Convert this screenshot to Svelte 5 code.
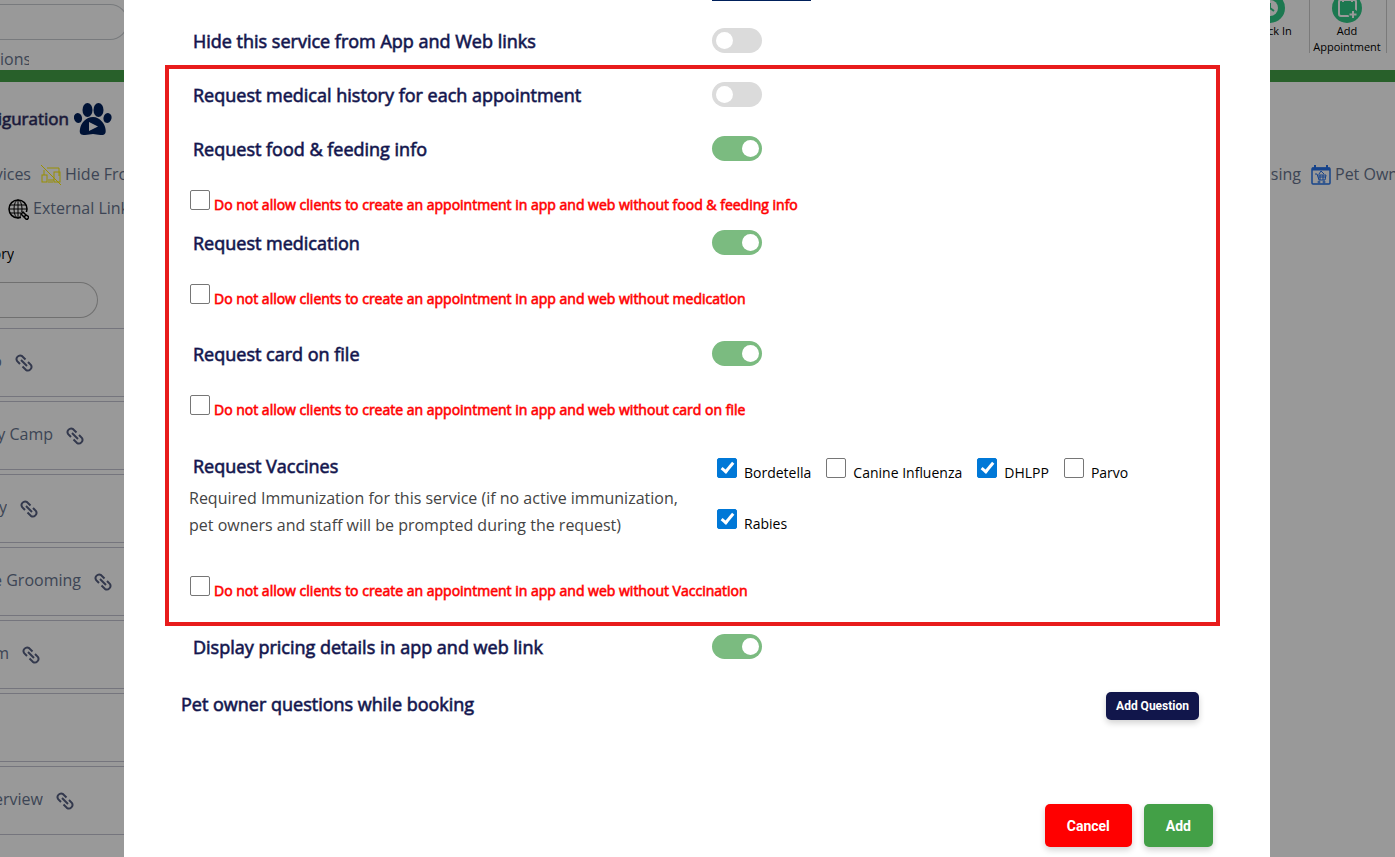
<style>
:global(body) {
  font-family: 'Open Sans', 'Noto Sans', sans-serif;
  background: #fff;
}

.screen {
  position: relative;
  height: 100vh;
  overflow: hidden;
}

.page {
  height: 100%;
  overflow: hidden;
  white-space: nowrap;
  color: #67748e;
  font-size: 16px;
}

.topbar {
  display: flex;
  justify-content: space-between;
  height: 70px;
  border-bottom: 12px solid #43a047;
  overflow: hidden;
}

.search {
  padding-top: 4px;
}

.search input,
.filter input {
  box-sizing: border-box;
  display: block;
  height: 36px;
  border: 1px solid #c8ccd0;
  border-left: 0;
  border-radius: 0 18px 18px 0;
  background: transparent;
}

.search input {
  width: 128px;
}

.search a {
  display: block;
  line-height: 38px;
}

a {
  color: inherit;
  text-decoration: none;
}

.search a {
  width: 29px;
}

.shortcuts {
  display: flex;
  height: 60px;
  margin-top: -7px;
  padding-right: 8px;
}

.shortcut {
  box-sizing: border-box;
  width: 77px;
  padding-right: 2px;
  border-right: 1px solid #ccc;
  color: #000;
  font-size: 11px;
  line-height: 16px;
  text-align: center;
}

.shortcut svg {
  display: block;
  margin: 0 auto;
}

.heading {
  display: flex;
  align-items: center;
  gap: 5px;
  margin: 0;
  padding-top: 20px;
  color: #2b2b60;
  font-size: 17px;
  font-weight: 400;
  line-height: 34px;
}

.clip {
  display: flex;
  flex: none;
  justify-content: flex-end;
  overflow: hidden;
}

.tabs {
  display: flex;
  justify-content: space-between;
  padding-top: 21px;
  line-height: 34px;
}

.tab-row {
  display: flex;
  align-items: center;
  gap: 10px;
}

.tab-row.second {
  padding-left: 8px;
}

.tab-row a {
  display: flex;
  flex: none;
  align-items: center;
  gap: 4px;
}

.tab-row svg {
  padding-top: 2px;
}

.tabs-right {
  width: 125px;
  overflow: hidden;
}

.filter label {
  display: block;
  padding: 19px 0 18px;
  color: #000;
  font-size: 14px;
  line-height: 20px;
}

.filter input {
  width: 98px;
  border-color: #bbb;
}

.cards {
  display: flex;
  flex-direction: column;
  gap: 4px;
  width: 50%;
  margin: 10px 0 0;
  padding: 0;
}

.cards li {
  box-sizing: border-box;
  display: flex;
  align-items: center;
  gap: 13px;
  height: 69px;
  padding-bottom: 3px;
  list-style: none;
  border: solid #c3c3d0;
  border-width: 1px 0;
}

.cards svg {
  margin-top: 4px;
}

.overlay {
  position: absolute;
  inset: 0;
  padding: 0 125px 0 124px;
  background: rgba(0, 0, 0, 0.4);
}

.modal {
  box-sizing: border-box;
  height: 100%;
  padding: 0 50px 0 41px;
  overflow: hidden;
  background: #fff;
  color: #11144c;
}

.upload-edge {
  width: 99px;
  height: 1px;
  margin-left: 547px;
  background: #00205b;
}

.setting {
  display: grid;
  grid-template-columns: 519px 1fr;
  align-items: center;
  height: 25px;
  padding-left: 24px;
  font-size: 18px;
}

.group .setting {
  margin-bottom: 29px;
}

.outer {
  padding-left: 28px;
}

.first {
  padding-top: 27px;
  padding-bottom: 12px;
}

.bold {
  -webkit-text-stroke: 1px color-mix(in srgb, currentColor 65%, transparent);
}

.group {
  padding: 13px 0 26px;
  border: 4px solid #e81c1c;
}

.toggle {
  appearance: none;
  display: block;
  width: 50px;
  height: 25px;
  margin: 0;
  padding: 4px;
  box-sizing: border-box;
  border-radius: 13px;
  background: #dbdbdb;
}

.toggle::before {
  content: '';
  display: block;
  width: 17px;
  height: 17px;
  border-radius: 50%;
  background: #fff;
}

.toggle:checked {
  padding-left: 30px;
  background: #7bbb80;
}

.check {
  display: flex;
  align-items: flex-start;
  height: 20px;
  font-size: 14px;
  line-height: 20px;
}

.check span {
  padding-top: 5px;
}

.check input {
  appearance: none;
  box-sizing: border-box;
  flex: none;
  width: 20px;
  height: 20px;
  margin: 0;
  border: 1px solid #767676;
  border-radius: 2px;
  background: #fff;
}

.check input:checked {
  border-color: #0078d7;
  background: #0078d7;
}

.check input:checked::before {
  content: '';
  display: block;
  width: 4px;
  height: 10px;
  margin: 1px 0 0 6px;
  border: solid #fff;
  border-width: 0 3px 3px 0;
  transform: rotate(40deg);
}

.block {
  gap: 4px;
  margin: 0 0 20px 21px;
  color: #f00;
}

.block.wide {
  margin-bottom: 37px;
}

.block.last {
  margin-bottom: 0;
}

.vaccines {
  display: grid;
  grid-template-columns: 528px 1fr;
  margin-bottom: 37px;
  padding-left: 20px;
}

.vaccines h2 {
  margin: 0;
  padding: 1px 0 5px 4px;
  font-size: 18px;
  font-weight: 400;
  line-height: 27px;
}

.vaccines p {
  margin: 0;
  color: #444;
  font-size: 16px;
  line-height: 27px;
}

.vaccine-list {
  display: flex;
  flex-wrap: wrap;
  align-content: flex-start;
  gap: 31px 15px;
  padding: 6px 70px 0 0;
  color: #000;
}

.vaccine-list .check {
  gap: 7px;
}

.display {
  padding-top: 8px;
}

.questions {
  display: flex;
  justify-content: space-between;
  align-items: flex-start;
  padding: 33px 21px 0 16px;
  font-size: 18px;
  line-height: 25px;
}

button {
  border: 0;
  border-radius: 5px;
  color: #fff;
  font-family: Roboto, sans-serif;
  font-weight: 700;
  box-shadow: 0 3px 6px rgba(0, 0, 0, 0.18);
}

.add-question {
  height: 28px;
  padding: 0 10px;
  background: #11164b;
  font-size: 12px;
}

.actions {
  display: flex;
  justify-content: flex-end;
  gap: 12px;
  padding: 84px 7px 0 0;
}

.actions button {
  height: 43px;
  padding: 0 22px;
  font-size: 14px;
}

.cancel {
  background: #f00;
}

.add {
  background: #43a047;
}
</style>

<script>
const services = [
  { name: 'Camp o', width: 2, link: true },
  { name: 'Day Camp', width: 53, link: true },
  { name: 'y', width: 7, link: true },
  { name: 'e Grooming', width: 81, link: true },
  { name: 'm', width: 9, link: true },
  { name: '', width: 0, link: false },
  { name: 'erview', width: 43, link: true }
];

let vaccines = [
  { name: 'Bordetella', required: true },
  { name: 'Canine Influenza', required: false },
  { name: 'DHLPP', required: true },
  { name: 'Parvo', required: false },
  { name: 'Rabies', required: true }
];

let hidden = false;
let history = false;
let feeding = true;
let medication = true;
let card = true;
let pricing = true;
</script>

<div class="screen">
  <div class="page">
    <header class="topbar">
      <div class="search">
        <input type="text" aria-label="Search" />
        <a href="#options" class="clip">ions</a>
      </div>
      <nav class="shortcuts">
        <a class="shortcut" href="#checkin">
          <svg width="30" height="30" viewBox="0 0 30 30" fill="none">
            <circle cx="15" cy="15" r="15" fill="#2fc885" />
            <circle cx="15" cy="15" r="8" fill="#fff" />
            <path d="M15 10v5l4 3" stroke="#2fc885" stroke-width="2" />
          </svg>
          Check In
        </a>
        <a class="shortcut" href="#appointment">
          <svg width="30" height="30" viewBox="0 0 30 30" fill="none">
            <circle cx="15" cy="15" r="15" fill="#2fc885" />
            <rect x="7" y="7" width="17" height="16" rx="2" stroke="#fff" stroke-width="2" />
            <path d="M11 5v4M20 5v4" stroke="#fff" stroke-width="2" />
            <circle cx="21.500" cy="21.500" r="5" fill="#2fc885" />
            <path d="M21 18v7M17.500 21.500h7" stroke="#fff" stroke-width="2" />
          </svg>
          Add<br />Appointment
        </a>
      </nav>
    </header>

    <h1 class="heading bold">
      <span class="clip" style="width: {69}px">iguration</span>
      <svg width="38" height="34" viewBox="0 -1 38 34" fill="#00205b">
        <ellipse cx="4" cy="15" rx="4" ry="5" transform="rotate(-15 4 15)" />
        <ellipse cx="13.500" cy="7" rx="5" ry="7" />
        <ellipse cx="24.500" cy="7" rx="5" ry="7" />
        <ellipse cx="33.500" cy="15" rx="4" ry="5" transform="rotate(15 33.500 15)" />
        <path
          d="M19 14c7 0 12 7 12.500 12 1 6-2 6-5 6-3 0-5-1-7.500-1s-5 1-8 1c-4 0-6-1-5-6 1-6 6-12 13-12z"
        />
        <path d="M15 19v9l9-4.500z" fill="#fff" />
      </svg>
    </h1>

    <div class="tabs">
      <nav>
        <div class="tab-row">
          <a href="#services" class="clip" style="width: {31}px">vices</a>
          <a href="#hide">
            <svg width="20" height="20" viewBox="0 0 20 20" fill="none" stroke="#fff000">
              <path d="M0 0l20 20M6 3h12v8M3 5v5M7 15h6M7 17h5" />
              <rect x="1" y="10" width="5" height="7" />
              <rect x="13" y="7" width="6" height="10" />
            </svg>
            Hide From
          </a>
        </div>
        <div class="tab-row second">
          <a href="#external">
            <svg width="21" height="21" viewBox="0 0 21 21" fill="none" stroke="#000">
              <circle cx="10" cy="10" r="9" stroke-width="1.500" />
              <ellipse cx="10" cy="10" rx="4" ry="9" />
              <path d="M10 1v18M1 10h18M2 6h16M2 14h12" />
              <path d="M13 13h8v8h-8z" fill="#fff" stroke="none" />
              <path
                d="M13 15l2-2 3 3-2 2zM16 18l2-2 3 2-2 3z"
                stroke-width="1.500"
              />
            </svg>
            External Links
          </a>
        </div>
      </nav>
      <nav class="tabs-right">
        <div class="tab-row">
          <a href="#processing" class="clip" style="width: {31}px">sing</a>
          <a href="#owner">
            <svg width="20" height="20" viewBox="0 0 20 20" fill="none" stroke="#2671e8">
              <rect x="1" y="3" width="18" height="16" rx="1" stroke-width="1.500" />
              <path d="M1 4h18" stroke-width="3" />
              <path d="M4 0v4M16 0v4" stroke-width="2" />
              <path d="M4 9h2l2 6h6l1-5H7M7 12h8M9 10v5M12 10v5M8 9l2-3 3 3" />
              <circle cx="8" cy="17" r="1" />
              <circle cx="13" cy="17" r="1" />
            </svg>
            Pet Owner
          </a>
        </div>
      </nav>
    </div>

    <div class="filter">
      <label for="category"><span class="clip" style="width: {14}px">ory</span></label>
      <input id="category" type="text" />
    </div>

    <ul class="cards">
      {#each services as service}
        <li>
          <span class="clip" style="width: {service.width}px">{service.name}</span>
          {#if service.link}
            <svg
              width="18"
              height="18"
              viewBox="0 0 18 18"
              fill="none"
              stroke="#565f80"
              stroke-width="2"
            >
              <path d="M5 10L2.200 7.200A3.600 3.600 0 0 1 7.200 2.200L10.500 5.500" />
              <path d="M6 6l6 6" />
              <path d="M13 8l2.800 2.800A3.600 3.600 0 0 1 10.800 15.800L7.500 12.500" />
            </svg>
          {/if}
        </li>
      {/each}
    </ul>
  </div>

  <div class="overlay">
    <main class="modal">
      <div class="upload-edge"></div>
      <div class="setting outer first">
        <label class="bold" for="hidden">Hide this service from App and Web links</label>
        <input id="hidden" class="toggle" type="checkbox" bind:checked={hidden} />
      </div>

      <section class="group">
        <div class="setting">
          <label class="bold" for="history">Request medical history for each appointment</label>
          <input id="history" class="toggle" type="checkbox" bind:checked={history} />
        </div>

        <div class="setting">
          <label class="bold" for="feeding">Request food &amp; feeding info</label>
          <input id="feeding" class="toggle" type="checkbox" bind:checked={feeding} />
        </div>
        <label class="check block bold">
          <input type="checkbox" />
          <span>Do not allow clients to create an appointment in app and web without food &amp; feeding info</span>
        </label>

        <div class="setting">
          <label class="bold" for="medication">Request medication</label>
          <input id="medication" class="toggle" type="checkbox" bind:checked={medication} />
        </div>
        <label class="check block wide bold">
          <input type="checkbox" />
          <span>Do not allow clients to create an appointment in app and web without medication</span>
        </label>

        <div class="setting">
          <label class="bold" for="card">Request card on file</label>
          <input id="card" class="toggle" type="checkbox" bind:checked={card} />
        </div>
        <label class="check block wide bold">
          <input type="checkbox" />
          <span>Do not allow clients to create an appointment in app and web without card on file</span>
        </label>

        <div class="vaccines">
          <div>
            <h2 class="bold">Request Vaccines</h2>
            <p>
              Required Immunization for this service (if no active immunization,<br />
              pet owners and staff will be prompted during the request)
            </p>
          </div>
          <div class="vaccine-list">
            {#each vaccines as vaccine}
              <label class="check">
                <input type="checkbox" bind:checked={vaccine.required} />
                <span>{vaccine.name}</span>
              </label>
            {/each}
          </div>
        </div>
        <label class="check block last bold">
          <input type="checkbox" />
          <span>Do not allow clients to create an appointment in app and web without Vaccination</span>
        </label>
      </section>

      <div class="setting outer display">
        <label class="bold" for="pricing">Display pricing details in app and web link</label>
        <input id="pricing" class="toggle" type="checkbox" bind:checked={pricing} />
      </div>

      <div class="questions">
        <span class="bold">Pet owner questions while booking</span>
        <button class="add-question">Add Question</button>
      </div>

      <div class="actions">
        <button class="cancel">Cancel</button>
        <button class="add">Add</button>
      </div>
    </main>
  </div>
</div>
